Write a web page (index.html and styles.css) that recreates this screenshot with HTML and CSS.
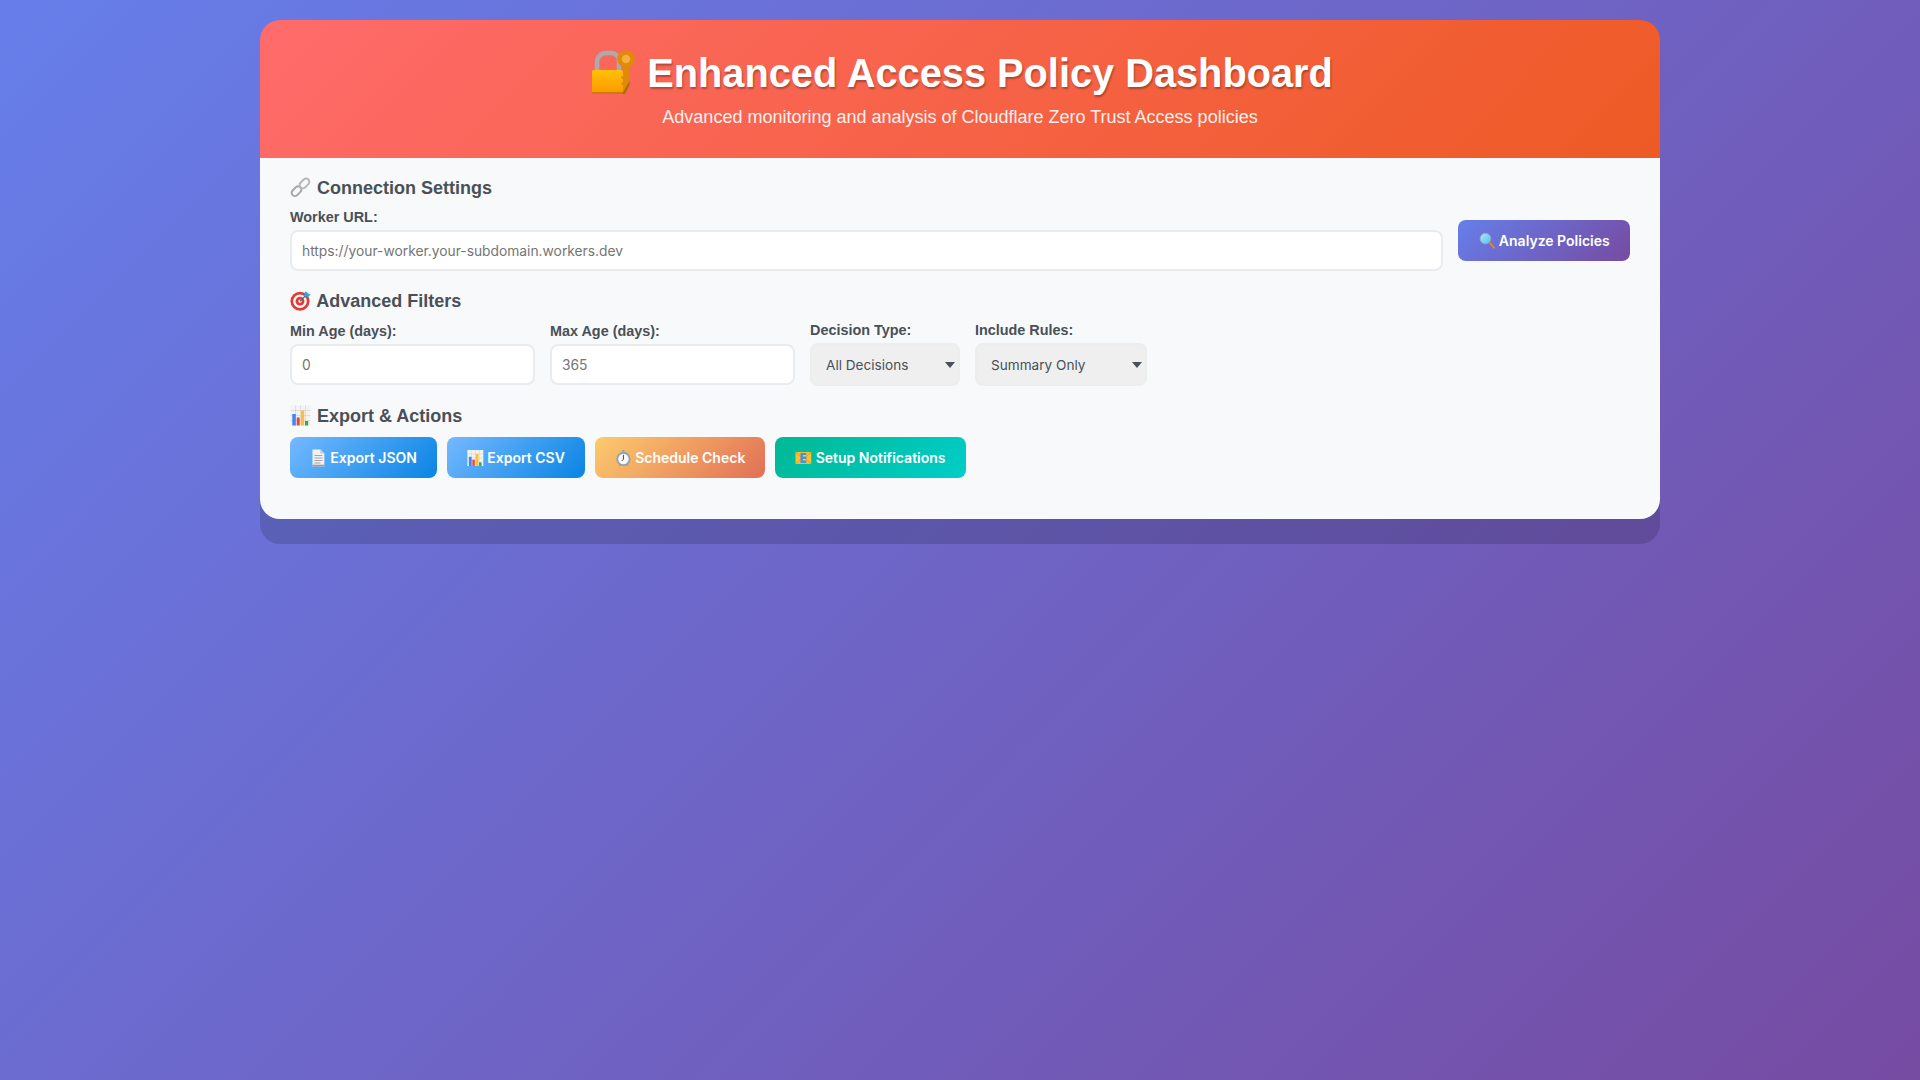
FILE: index.html
```html
<!DOCTYPE html>
<html lang="en">
<head>
<meta charset="utf-8">
<title>Enhanced Access Policy Dashboard</title>
<link rel="stylesheet" href="styles.css">
</head>
<body>
<svg class="defs" aria-hidden="true">
  <defs>
    <linearGradient id="gold" x1="0" y1="0" x2="0" y2="1">
      <stop offset="0" stop-color="#ffc107"/>
      <stop offset="1" stop-color="#ff9800"/>
    </linearGradient>
    <linearGradient id="lens" x1="0" y1="0" x2="1" y2="1">
      <stop offset="0" stop-color="#b3e5fc"/>
      <stop offset="1" stop-color="#4fc3f7"/>
    </linearGradient>
  </defs>
  <symbol id="i-lock" viewBox="-3 0 47 46" overflow="visible">
    <path d="M7 23V12a9 9 0 0 1 9-9h6a9 9 0 0 1 7 6v14" fill="none" stroke="#ababab" stroke-width="4.5"/>
    <rect x="2" y="20" width="31" height="23" rx="2" fill="url(#gold)"/>
    <rect x="2" y="42" width="31" height="2" rx="1" fill="#c97a10"/>
    <path d="M33 14h6.5v21l-3.5 8-3-3v-5h-1.5v-3h1.5v-3h-1.5v-3h1.5z" fill="#df8a08"/>
    <path d="M32 44h3l4.5-9v-4l-7.5 13z" fill="#b06a08"/>
    <circle cx="36" cy="9" r="6.5" fill="#f7ae3c" stroke="#df8a08" stroke-width="4.5"/>
  </symbol>
  <symbol id="i-link" viewBox="0 0 21 21">
    <rect x="1" y="11" width="11" height="6.5" rx="3.2" transform="rotate(-45 6.5 14.2)" fill="none" stroke="#a8a8a8" stroke-width="2"/>
    <rect x="9" y="3.2" width="11" height="6.5" rx="3.2" transform="rotate(-45 14.5 6.5)" fill="none" stroke="#b8b8b8" stroke-width="2"/>
  </symbol>
  <symbol id="i-target" viewBox="0 0 21 21">
    <circle cx="10" cy="11.2" r="9.5" fill="#e53935"/>
    <circle cx="10" cy="11.2" r="6.8" fill="#fafafa"/>
    <circle cx="10" cy="11.2" r="4.4" fill="#e53935"/>
    <circle cx="10" cy="11.2" r="1.6" fill="#fafafa"/>
    <path d="M10 11.2 16 5.2" stroke="#546e7a" stroke-width="1.3"/>
    <path d="M14 6 15 1.5l2.5 1 .5 1 2.5 1L18 7z" fill="#29a9e0"/>
  </symbol>
  <symbol id="i-chart" viewBox="0 0 21 21">
    <rect x="0.5" y="0.5" width="20" height="20" fill="#f3f3f3"/>
    <path d="M0.5 5.5h20M0.5 10.5h20M0.5 15.5h20M5.5 .5v20M10.5 .5v20M15.5 .5v20" stroke="#d4d4d4" stroke-width=".7" fill="none"/>
    <rect x="2.3" y="9" width="3.5" height="11.5" fill="#4285f4"/>
    <rect x="6.7" y="12.5" width="3" height="8" fill="#e8453c"/>
    <rect x="11" y="5.5" width="3.2" height="15" fill="#fbc02d"/>
    <rect x="15" y="16" width="3.2" height="4.5" fill="#34a853"/>
  </symbol>
  <symbol id="i-doc" viewBox="0 0 17 18">
    <path d="M2.5 0.5h8l4 4v13h-12z" fill="#f1f1f1"/>
    <path d="M10.5 .5v4h4z" fill="#c8c8c8"/>
    <path d="M4.5 6.5h8M4.5 9h8M4.5 11.5h8M4.5 14h6" stroke="#a5a5a5" stroke-width="1.1"/>
    <rect x="2.5" y="15.8" width="12" height="1.8" fill="#9a9a9a"/>
  </symbol>
  <symbol id="i-clock" viewBox="0 0 17 18">
    <path d="M1.5 3.5 4 1l1 2zM15.5 3.5 13 1l-1 2z" fill="#fbc02d"/>
    <rect x="7.5" y="0.8" width="2" height="2" fill="#9e9e9e"/>
    <circle cx="8.5" cy="10" r="7.2" fill="#90a4ae"/>
    <circle cx="8.5" cy="10" r="5.3" fill="#fafafa"/>
    <path d="M8.5 5.8V10.3L6.8 12" stroke="#37474f" stroke-width="1" fill="none"/>
    <path d="M3.5 17l1.5-2 1 1zM13.5 17 12 15l-1 1z" fill="#78909c"/>
  </symbol>
  <symbol id="i-mail" viewBox="0 0 17 18">
    <rect x="0.5" y="3" width="16" height="12" fill="#fbc02d"/>
    <path d="M0.5 3 6 8M16.5 3 11 8M0.5 15 6 10M16.5 15 11 10" stroke="#f19b1d" stroke-width="1" fill="none"/>
    <rect x="5.5" y="4" width="6" height="10" fill="#4a90d9"/>
    <rect x="8" y="6" width="3.5" height="1.5" fill="#ffca40"/>
    <rect x="8" y="10" width="3.5" height="1.5" fill="#ffca40"/>
  </symbol>
  <symbol id="i-search" viewBox="0 0 17 18">
    <path d="M10 11l1.2-1.2 4.8 5.6c.5.6-.7 1.8-1.3 1.3z" fill="#ef8a12"/>
    <circle cx="6.5" cy="6.5" r="5.4" fill="url(#lens)" stroke="#8fa9b8" stroke-width="1"/>
  </symbol>
</svg>
<div class="container">
  <header class="header">
    <h1><svg class="icon icon-title" aria-hidden="true"><use href="#i-lock"/></svg> Enhanced Access Policy Dashboard</h1>
    <p>Advanced monitoring and analysis of Cloudflare Zero Trust Access policies</p>
  </header>
  <main class="controls">
    <section class="section">
      <h3><svg class="icon icon-head" aria-hidden="true"><use href="#i-link"/></svg> Connection Settings</h3>
      <div class="row">
        <div class="group group-grow">
          <label for="url">Worker URL:</label>
          <input id="url" class="field" type="text" placeholder="https://your-worker.your-subdomain.workers.dev">
        </div>
        <button class="btn btn-primary"><svg class="icon icon-btn" aria-hidden="true"><use href="#i-search"/></svg> Analyze Policies</button>
      </div>
    </section>
    <section class="section">
      <h3><svg class="icon icon-head" aria-hidden="true"><use href="#i-target"/></svg> Advanced Filters</h3>
      <div class="row">
        <div class="group">
          <label for="min">Min Age (days):</label>
          <input id="min" class="field field-num" type="text" placeholder="0">
        </div>
        <div class="group">
          <label for="max">Max Age (days):</label>
          <input id="max" class="field field-num" type="text" placeholder="365">
        </div>
        <div class="group">
          <label for="dec">Decision Type:</label>
          <select id="dec" class="select select-dec"><option>All Decisions</option></select>
        </div>
        <div class="group">
          <label for="rules">Include Rules:</label>
          <select id="rules" class="select select-rules"><option>Summary Only</option></select>
        </div>
      </div>
    </section>
    <section class="section">
      <h3><svg class="icon icon-head" aria-hidden="true"><use href="#i-chart"/></svg> Export &amp; Actions</h3>
      <div class="actions">
        <button class="btn btn-blue"><svg class="icon icon-btn" aria-hidden="true"><use href="#i-doc"/></svg> Export JSON</button>
        <button class="btn btn-blue"><svg class="icon icon-btn" aria-hidden="true"><use href="#i-chart"/></svg> Export CSV</button>
        <button class="btn btn-orange"><svg class="icon icon-btn" aria-hidden="true"><use href="#i-clock"/></svg> Schedule Check</button>
        <button class="btn btn-green"><svg class="icon icon-btn" aria-hidden="true"><use href="#i-mail"/></svg> Setup Notifications</button>
      </div>
    </section>
  </main>
</div>
</body>
</html>
```
FILE: styles.css
```css
* { box-sizing: border-box; }
html, body { margin: 0; }
body {
  min-height: 1080px;
  padding: 20px;
  background: linear-gradient(135deg, #667eea 0%, #764ba2 100%);
  font-family: "Liberation Sans", Arial, sans-serif;
  color: #495057;
}
.defs { display: block; width: 0; height: 0; }
.container {
  max-width: 1400px;
  margin: 0 auto;
  border-radius: 20px;
  box-shadow: 0 25px 0 rgba(0, 0, 0, 0.15);
}
.header {
  padding: 30px;
  border-radius: 20px 20px 0 0;
  background: linear-gradient(135deg, #ff6b6b, #ee5a24);
  color: #fff;
  text-align: center;
}
.header h1 {
  margin: 0 0 10px;
  font-size: 39.75px;
  line-height: 46px;
  font-weight: 700;
  text-shadow: 1px 2px 2px rgba(0, 0, 0, 0.3);
}
.header p {
  margin: 0;
  font-size: 18px;
  line-height: 22px;
  opacity: 0.9;
}
.icon { display: inline-block; overflow: visible; }
.icon-title { width: 47px; height: 46px; margin: -10px 2px -10px 0; vertical-align: 1px; }
.icon-head { width: 21px; height: 21px; margin: -4px 1px -4px 0; vertical-align: 0; }
.icon-btn { width: 16.8px; height: 18px; margin: -4px 0; vertical-align: 0; }
.controls {
  padding: 20px 30px 41px;
  background: #f8f9fa;
  border-radius: 0 0 20px 20px;
}
.section { margin-bottom: 20px; }
.section:last-child { margin-bottom: 0; }
.section h3 {
  margin: 0 0 10px;
  font-size: 18px;
  line-height: 21px;
  font-weight: 700;
}
.row { display: flex; align-items: center; gap: 15px; }
.group { display: flex; flex-direction: column; gap: 5px; }
.group-grow { flex: 1; }
.group label { font-size: 14.4px; line-height: 16px; font-weight: 700; }
.field {
  height: 41px;
  padding: 10px;
  border: 2px solid #e9ecef;
  border-radius: 8px;
  background: #fff;
  font: 13.8px Inter, sans-serif;
  color: #495057;
}
.field::placeholder { color: #757575; }
.group-grow .field { width: 100%; }
.field-num { width: 245px; }
.select {
  appearance: none;
  height: 43px;
  padding: 10px 14px;
  border: 2px solid #eceded;
  border-radius: 8px;
  background-color: #efefef;
  background-image: url("data:image/svg+xml;utf8,<svg xmlns='http://www.w3.org/2000/svg' width='10' height='6'><path d='M0 0h10L5 6z' fill='%23495057'/></svg>");
  background-repeat: no-repeat;
  background-position: right 3px center;
  font: 13.6px Inter, sans-serif;
  color: #495057;
}
.select-dec { width: 150px; }
.select-rules { width: 172px; }
.actions { display: flex; gap: 10px; }
.btn {
  height: 41px;
  padding: 0 20px;
  border: 0;
  border-radius: 8px;
  color: #fff;
  font: 600 14px Inter, sans-serif;
  white-space: nowrap;
}
.btn-primary { padding: 0 20.3px; background: linear-gradient(135deg, #667eea, #764ba2); }
.btn-blue { background: linear-gradient(135deg, #74b9ff, #0984e3); }
.btn-orange { background: linear-gradient(135deg, #fdcb6e, #e17055); }
.btn-green { background: linear-gradient(135deg, #00b894, #00cec9); }
```
